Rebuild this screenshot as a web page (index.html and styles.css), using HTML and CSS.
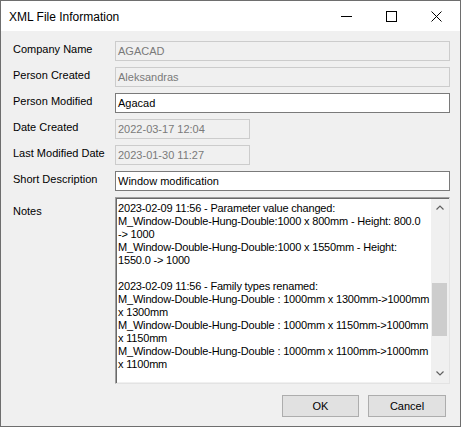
FILE: index.html
```html
<!DOCTYPE html>
<html>
<head>
<meta charset="utf-8">
<link rel="stylesheet" href="styles.css">
</head>
<body>
<div class="window">
  <div class="titlebar">
    <div class="title">XML File Information</div>
    <div class="caption-buttons">
      <div class="cap-btn">
        <svg width="11" height="11" viewBox="0 0 11 11"><path d="M0 5.5H11" stroke="#000" stroke-width="1"/></svg>
      </div>
      <div class="cap-btn">
        <svg width="11" height="11" viewBox="0 0 11 11"><rect x="0.5" y="0.5" width="10" height="10" fill="none" stroke="#000" stroke-width="1"/></svg>
      </div>
      <div class="cap-btn">
        <svg width="11" height="11" viewBox="0 0 11 11"><path d="M0.5 0.5L10.5 10.5M10.5 0.5L0.5 10.5" stroke="#000" stroke-width="1"/></svg>
      </div>
    </div>
  </div>
  <div class="form">
    <div class="label">Company Name</div>
    <div class="field disabled">AGACAD</div>
    <div class="label">Person Created</div>
    <div class="field disabled">Aleksandras</div>
    <div class="label">Person Modified</div>
    <div class="field">Agacad</div>
    <div class="label">Date Created</div>
    <div class="field disabled short">2022-03-17 12:04</div>
    <div class="label">Last Modified Date</div>
    <div class="field disabled short">2023-01-30 11:27</div>
    <div class="label">Short Description</div>
    <div class="field">Window modification</div>
    <div class="label notes-label">Notes</div>
    <div class="notes">
      <div class="notes-text">2023-02-09 11:56 - Parameter value changed:<br>M_Window-Double-Hung-Double:1000 x 800mm - Height: 800.0<br>-&gt; 1000<br>M_Window-Double-Hung-Double:1000 x 1550mm - Height:<br>1550.0 -&gt; 1000<br><br>2023-02-09 11:56 - Family types renamed:<br>M_Window-Double-Hung-Double : 1000mm x 1300mm-&gt;1000mm<br>x 1300mm<br>M_Window-Double-Hung-Double : 1000mm x 1150mm-&gt;1000mm<br>x 1150mm<br>M_Window-Double-Hung-Double : 1000mm x 1100mm-&gt;1000mm<br>x 1100mm</div>
      <div class="scrollbar">
        <div class="arrow">
          <svg width="8" height="5" viewBox="0 0 8 5"><path d="M0.5 4.5L4 1L7.5 4.5" fill="none" stroke="#606060" stroke-width="1.2"/></svg>
        </div>
        <div class="track"><div class="thumb"></div></div>
        <div class="arrow">
          <svg width="8" height="5" viewBox="0 0 8 5"><path d="M0.5 0.5L4 4L7.5 0.5" fill="none" stroke="#606060" stroke-width="1.2"/></svg>
        </div>
      </div>
    </div>
  </div>
  <div class="buttons">
    <div class="btn ok">OK</div>
    <div class="btn cancel">Cancel</div>
  </div>
</div>
</body>
</html>
```

FILE: styles.css
```css
html, body {
  margin: 0;
  padding: 0;
  background: #f0f0f0;
}

.window {
  width: 461px;
  height: 427px;
  box-sizing: border-box;
  border: 1px solid #6e6e6e;
  background: #f0f0f0;
  font-family: "Liberation Sans", Arial, sans-serif;
  font-size: 11px;
  color: #000;
  display: flex;
  flex-direction: column;
}

.titlebar {
  height: 30px;
  background: #fff;
  display: flex;
  align-items: center;
  justify-content: space-between;
}

.title {
  padding-left: 8px;
  font-size: 12px;
  line-height: 30px;
  padding-top: 1px;
  color: #000;
}

.caption-buttons {
  display: flex;
  height: 30px;
  padding-right: 1px;
}

.cap-btn {
  width: 45px;
  height: 30px;
  display: flex;
  align-items: center;
  justify-content: center;
}

.cap-btn svg {
  display: block;
}

.form {
  display: grid;
  grid-template-columns: 102px 335px;
  grid-template-rows: repeat(6, 20px) 187px;
  row-gap: 6px;
  padding: 10px 0 0 12px;
}

.label {
  line-height: 13px;
  padding-top: 2px;
  white-space: nowrap;
  color: #000;
}

.notes-label {
  padding-top: 8px;
}

.field {
  box-sizing: border-box;
  height: 20px;
  border: 1px solid #7a7a7a;
  background: #fff;
  padding: 3px 2px 0 2px;
  line-height: 13px;
  white-space: nowrap;
  overflow: hidden;
}

.field.disabled {
  border-color: #cccccc;
  background: #f0f0f0;
  color: #7a7a7a;
}

.field.short {
  width: 135px;
}

.notes {
  box-sizing: border-box;
  height: 187px;
  background: #fff;
  border-top: 1px solid #a0a0a0;
  border-left: 1px solid #a0a0a0;
  border-right: 1px solid #e3e3e3;
  border-bottom: 1px solid #e3e3e3;
  box-shadow: inset 1px 1px 0 #696969, inset -1px -1px 0 #f0f0f0;
  display: flex;
  padding: 1px;
}

.notes-text {
  flex: 1;
  min-width: 0;
  padding: 3px 0 0 1px;
  line-height: 13px;
  letter-spacing: -0.18px;
  white-space: nowrap;
}

.scrollbar {
  width: 17px;
  flex: none;
  background: #f0f0f0;
  display: flex;
  flex-direction: column;
}

.arrow {
  height: 17px;
  display: flex;
  align-items: center;
  justify-content: center;
}

.arrow svg {
  display: block;
}

.track {
  flex: 1;
  padding: 67px 1px 0 1px;
}

.thumb {
  height: 53px;
  background: #cdcdcd;
}

.buttons {
  display: flex;
  justify-content: flex-end;
  gap: 9px;
  padding: 11px 14px 0 0;
}

.btn {
  box-sizing: border-box;
  height: 22px;
  background: #e1e1e1;
  border: 1px solid #adadad;
  display: flex;
  align-items: center;
  justify-content: center;
  line-height: 13px;
  padding-top: 1px;
}

.btn.ok {
  width: 77px;
}

.btn.cancel {
  width: 78px;
}
```
